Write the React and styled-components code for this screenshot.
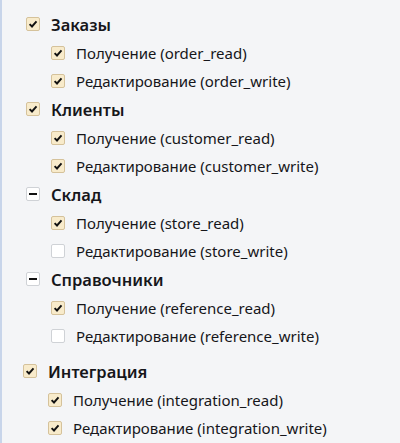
import React from 'react';
import styled, { createGlobalStyle } from 'styled-components';

const GlobalStyle = createGlobalStyle`
  html, body {
    margin: 0;
    padding: 0;
    background: #f4f5f7;
  }
  body {
    font-family: "Noto Sans", "Open Sans", sans-serif;
    color: #16161a;
  }
`;

const groups = [
  {
    title: 'Заказы',
    state: 'checked',
    items: [
      { label: 'Получение (order_read)', checked: true },
      { label: 'Редактирование (order_write)', checked: true },
    ],
  },
  {
    title: 'Клиенты',
    state: 'checked',
    items: [
      { label: 'Получение (customer_read)', checked: true },
      { label: 'Редактирование (customer_write)', checked: true },
    ],
  },
  {
    title: 'Склад',
    state: 'partial',
    items: [
      { label: 'Получение (store_read)', checked: true },
      { label: 'Редактирование (store_write)', checked: false },
    ],
  },
  {
    title: 'Справочники',
    state: 'partial',
    items: [
      { label: 'Получение (reference_read)', checked: true },
      { label: 'Редактирование (reference_write)', checked: false },
    ],
  },
];

const integration = {
  title: 'Интеграция',
  state: 'checked',
  items: [
    { label: 'Получение (integration_read)', checked: true },
    { label: 'Редактирование (integration_write)', checked: true },
  ],
};

const Check = ({ state }) => (
  <Box $state={state}>
    {state === 'checked' && (
      <svg width="10" height="10" viewBox="0 0 10 10">
        <path d="M1.6 5.1 L4 7.5 L8.5 2.4" fill="none" stroke="#111" strokeWidth="1.9" />
      </svg>
    )}
    {state === 'partial' && <Dash />}
  </Box>
);

const Group = ({ group, shift }) => (
  <GroupBlock $shift={shift}>
    <HeaderRow>
      <Check state={group.state} />
      <HeaderLabel>{group.title}</HeaderLabel>
    </HeaderRow>
    {group.items.map((item) => (
      <ItemRow key={item.label}>
        <Check state={item.checked ? 'checked' : 'empty'} />
        <ItemLabel>{item.label}</ItemLabel>
      </ItemRow>
    ))}
  </GroupBlock>
);

const App = () => (
  <>
    <GlobalStyle />
    <Page>
      {groups.map((g) => (
        <Group key={g.title} group={g} />
      ))}
      <Spacer />
      <Group group={integration} shift={-3} />
    </Page>
  </>
);

const Page = styled.div`
  width: 400px;
  height: 443px;
  box-sizing: border-box;
  border-left: 2px solid #c8d5ea;
  padding: 9.5px 0 0 23.5px;
  overflow: hidden;
`;

const GroupBlock = styled.div`
  display: flex;
  flex-direction: column;
  margin-left: ${(p) => p.$shift || 0}px;
`;

const Spacer = styled.div`
  height: 7px;
`;

const HeaderRow = styled.div`
  display: flex;
  align-items: center;
  gap: 11.5px;
  height: 29px;
`;

const ItemRow = styled.div`
  display: flex;
  align-items: center;
  gap: 11.5px;
  height: 28px;
  padding-left: 25px;
`;

const HeaderLabel = styled.span`
  font-size: 16.5px;
  font-weight: 600;
`;

const ItemLabel = styled.span`
  font-size: 15px;
`;

const Box = styled.span`
  width: 14px;
  height: 14px;
  box-sizing: border-box;
  border-radius: 2px;
  border: 1px solid ${(p) => (p.$state === 'checked' ? '#d5c29b' : '#cfd2d6')};
  background: ${(p) => (p.$state === 'checked' ? '#f8ebcb' : '#ffffff')};
  display: flex;
  align-items: center;
  justify-content: center;
  flex-shrink: 0;
`;

const Dash = styled.span`
  width: 8px;
  height: 2px;
  background: #111;
`;

export default App;
